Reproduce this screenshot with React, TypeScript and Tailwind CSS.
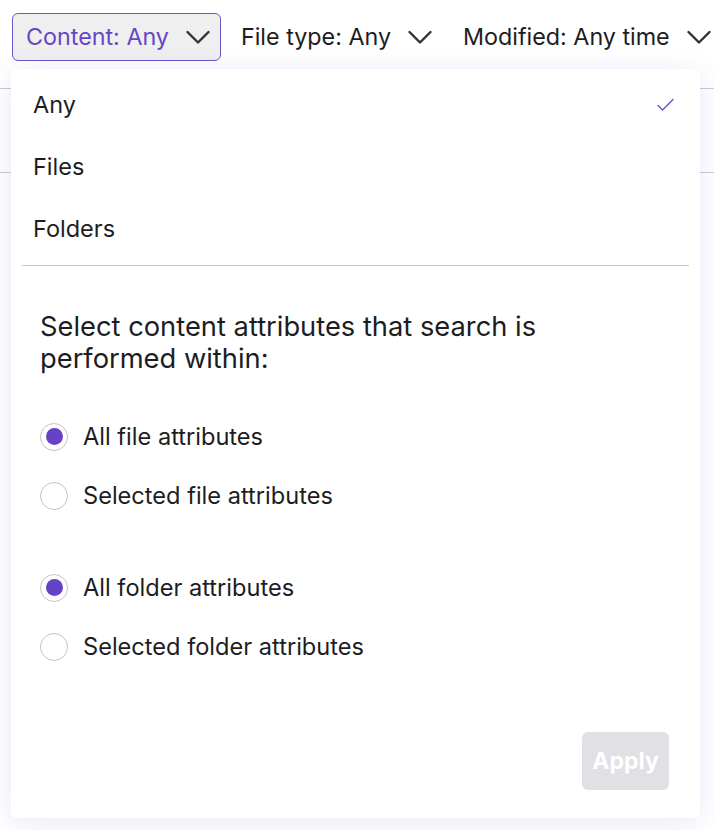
import React from 'react';

function Chevron() {
  return (
    <svg width="24" height="24" viewBox="0 0 24 24" fill="none" className="shrink-0">
      <path d="M1.5 7 L12 17.5 L22.5 7" stroke="#333336" strokeWidth="2.4" strokeLinecap="round" strokeLinejoin="round" />
    </svg>
  );
}

function FilterButton({ label, active = false }: { label: string; active?: boolean }) {
  return (
    <button
      className={`h-12 pl-[13px] pr-[10px] flex items-center gap-[17px] rounded-md border text-[23.3px] ${
        active ? 'border-[#6e55cf] bg-[#efeff0] text-[#6646c6]' : 'border-transparent text-[#1d1d1f]'
      }`}
    >
      <span>{label}</span>
      <Chevron />
    </button>
  );
}

function Radio({ label, checked = false }: { label: string; checked?: boolean }) {
  return (
    <div className="h-[59px] flex items-center gap-[15px]">
      <span className="w-7 h-7 rounded-full border border-[#c4c4c8] bg-white flex items-center justify-center">
        {checked && <span className="w-[17px] h-[17px] rounded-full bg-[#6542c6]" />}
      </span>
      <span className="text-[23.6px] text-[#1d1d1f]">{label}</span>
    </div>
  );
}

export default function App() {
  const items = ['Any', 'Files', 'Folders'];

  return (
    <div
      className="relative w-[714px] h-[830px] bg-white overflow-hidden"
      style={{ fontFamily: 'Inter, "Noto Sans", sans-serif' }}
    >
      {/* ─── Filter bar ─── */}
      <div className="flex items-center gap-[6px] pl-[12px] pt-[13px] pb-[13px] whitespace-nowrap">
        <FilterButton label="Content: Any" active />
        <FilterButton label="File type: Any" />
        <FilterButton label="Modified: Any time" />
      </div>

      {/* ─── Page rows behind the menu ─── */}
      <div className="pt-[14px]">
        <div className="h-[85px] border-y border-[#cacad0]" />
      </div>

      {/* ─── Dropdown ─── */}
      <div className="absolute left-[11px] top-[69px] w-[689px] h-[749px] bg-white rounded-md shadow-[0_4px_28px_rgba(90,70,190,0.13)] flex flex-col">
        <div className="pt-[5px]">
          {items.map((it, i) => (
            <div key={it} className="h-[62px] px-[22px] flex items-center justify-between text-[23.5px] text-[#1d1d1f]">
              <span>{it}</span>
              {i === 0 && (
                <svg width="20" height="16" viewBox="0 0 20 16" fill="none" className="mr-[2px]">
                  <path d="M2 8.5 L6.5 13 L17 2.5" stroke="#6a4fd0" strokeWidth="1.4" strokeLinecap="round" strokeLinejoin="round" />
                </svg>
              )}
            </div>
          ))}
        </div>
        <div className="mx-[11px] mt-[5px] border-t border-[#c8c8cc]" />

        <div className="pl-[29px] pr-[29px] pt-[45px]">
          <p className="text-[27.3px] leading-[32px] text-[#1d1d1f] max-w-[540px]">
            Select content attributes that search is performed within:
          </p>
          <div className="mt-[32px]">
            <Radio label="All file attributes" checked />
            <Radio label="Selected file attributes" />
          </div>
          <div className="mt-[33px]">
            <Radio label="All folder attributes" checked />
            <Radio label="Selected folder attributes" />
          </div>
        </div>

        <div className="mt-auto flex justify-end pr-[31px] pb-[28px]">
          <button className="w-[87px] h-[58px] rounded-md bg-[#e1e1e5] text-white text-[23px] font-bold">
            Apply
          </button>
        </div>
      </div>
    </div>
  );
}
